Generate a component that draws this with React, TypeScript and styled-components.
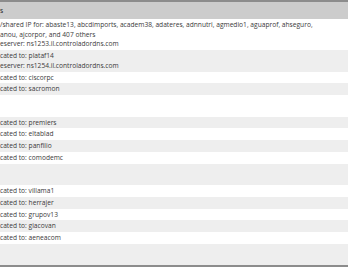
import React from 'react';
import styled, {createGlobalStyle} from 'styled-components';

const GlobalStyle = createGlobalStyle`
	html, body {
		margin: 0;
		padding: 0;
		background: #fff;
	}
	body {
		width: 348px;
		height: 268px;
		overflow: hidden;
		font-family: 'Open Sans', 'Liberation Sans', sans-serif;
	}
`;

const Table = styled.div`
	display: flex;
	flex-direction: column;
	width: 348px;
	border-top: 2px solid #8c8c8c;
	border-bottom: 2px solid #8c8c8c;
	font-size: 6.65px;
	line-height: 9.75px;
	color: #3a3a3a;
`;

const HeaderRow = styled.div`
	background: #cccccc;
	padding: 3.5px 0;
	color: #222;
	white-space: nowrap;
`;

const Row = styled.div<{$lines?: number}>`
	padding: 1px 0;
	min-height: ${p => (p.$lines ?? 1) * 9.75}px;
	white-space: nowrap;
	background: #fff;

	&:nth-child(odd) {
		background: #eeeeee;
	}
`;

const Line = styled.div`
	overflow: hidden;
`;

type Entry = {
	lines: string[];
	blank?: boolean;
};

const entries: Entry[] = [
	{
		lines: [
			'/shared IP for: abaste13, abcdimports, academ38, adateres, adnnutri, agmedio1, aguaprof, ahseguro,',
			'anou, ajcorpor, and 407 others',
			'eserver: ns1253.il.controladordns.com',
		],
	},
	{lines: ['cated to: plataf14', 'eserver: ns1254.il.controladordns.com']},
	{lines: ['cated to: ciscorpc']},
	{lines: ['cated to: sacromon']},
	{lines: [], blank: true},
	{lines: ['cated to: premiers']},
	{lines: ['cated to: eltablad']},
	{lines: ['cated to: panfilio']},
	{lines: ['cated to: comodemc']},
	{lines: [], blank: true},
	{lines: ['cated to: villama1']},
	{lines: ['cated to: herrajer']},
	{lines: ['cated to: grupov13']},
	{lines: ['cated to: giacovan']},
	{lines: ['cated to: aeneacom']},
	{lines: [], blank: true},
];

const App = () => (
	<>
		<GlobalStyle />
		<Table>
			<HeaderRow>s</HeaderRow>
			{entries.map((entry, i) => (
				<Row key={i} $lines={entry.blank ? 2 : entry.lines.length}>
					{entry.lines.map((line, j) => (
						<Line key={j}>{line}</Line>
					))}
				</Row>
			))}
		</Table>
	</>
);

export default App;
